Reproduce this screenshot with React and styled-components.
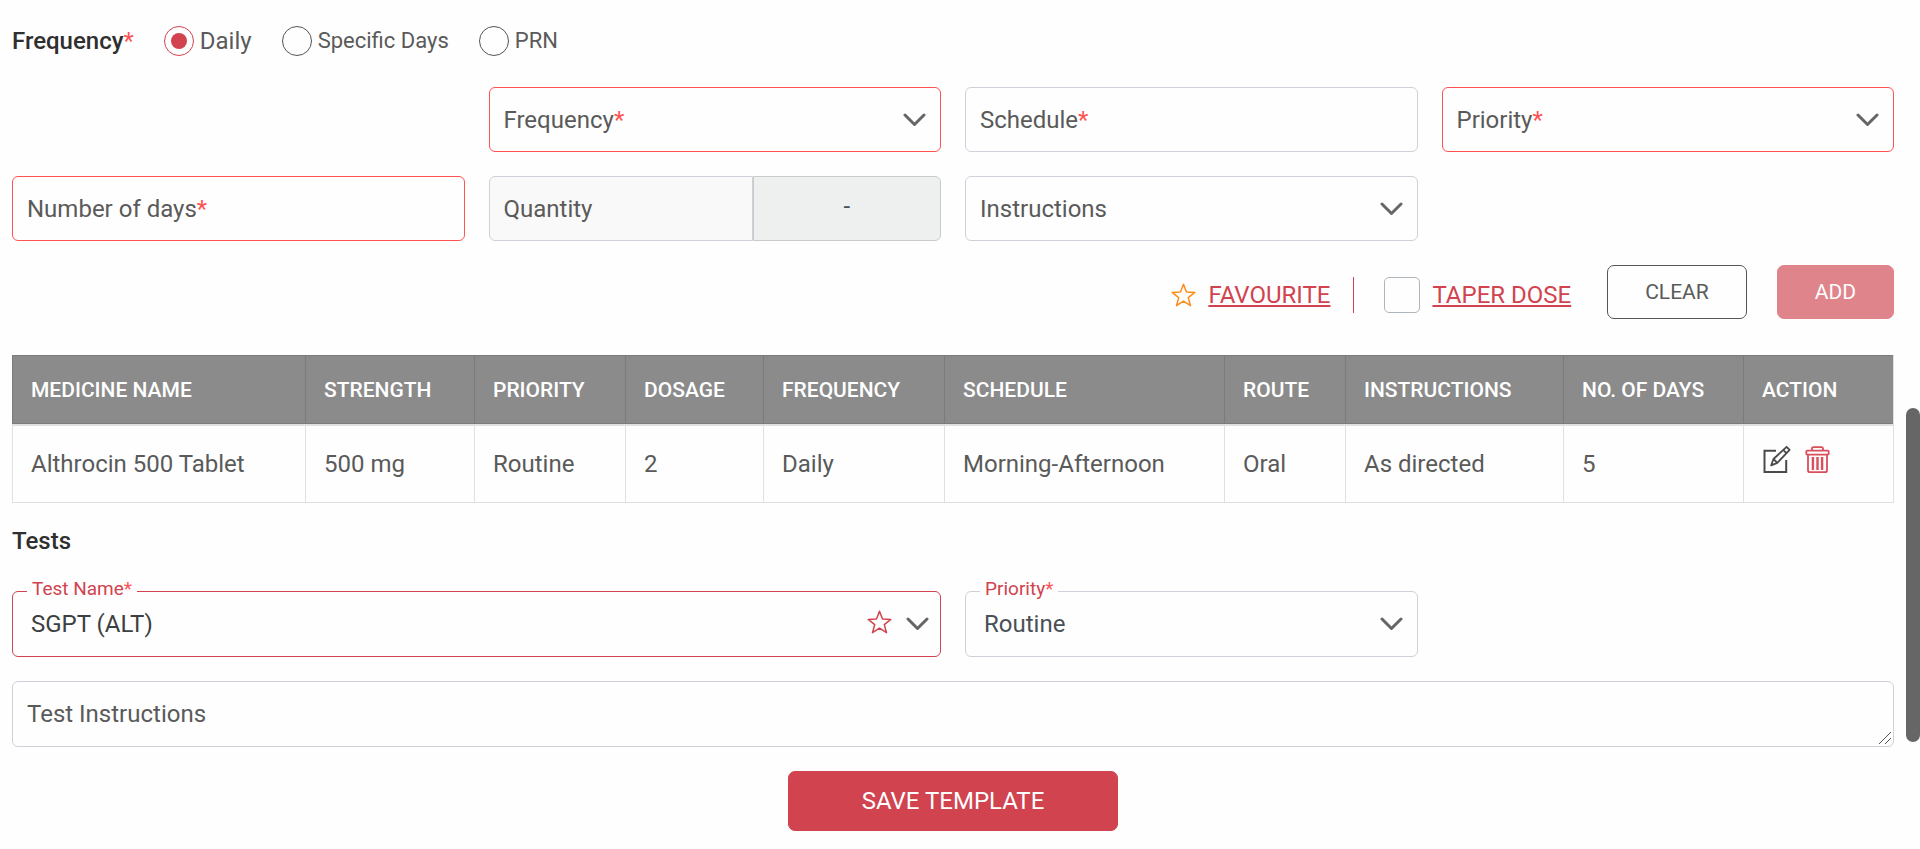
import React from "react";
import styled, { createGlobalStyle, css } from "styled-components";

const color = {
  text: "#5a5a5a",
  dark: "#2f2f2f",
  primary: "#d1434f",
  error: "#ff5252",
  line: "#ced1d9",
  cell: "#e0e0e0",
};

const GlobalStyle = createGlobalStyle`
  *, *::before, *::after { box-sizing: border-box; }
  body {
    margin: 0;
    background: #fefefe;
    color: ${color.text};
    font-family: Roboto, "Liberation Sans", sans-serif;
    font-size: 24px;
    line-height: 28px;
  }
  button, input, select, textarea { font: inherit; color: inherit; margin: 0; }
`;

const Page = styled.div`
  display: flex;
  min-height: 100vh;
`;

const Content = styled.main`
  flex: 1;
  min-width: 0;
  padding: 23px 12px 12px;
`;

const ScrollRail = styled.div`
  position: relative;
  flex: 0 0 14px;
`;

const ScrollThumb = styled.div`
  position: absolute;
  top: 48%;
  left: 0;
  width: 14px;
  height: 334px;
  border-radius: 7px;
  background: #666;
`;

const RadioRow = styled.div`
  display: flex;
  align-items: center;
  gap: 30px;
  height: 36px;
  margin-bottom: 28px;
`;

const Heading = styled.h2`
  margin: 0;
  color: ${color.dark};
  font-size: 24px;
  font-weight: 500;
  line-height: 28px;
`;

const TestsHeading = styled(Heading)`
  margin: 24px 0 36px;
`;

const Required = styled.span`
  color: ${color.error};
  font-weight: 400;
`;

const RadioLabel = styled.label`
  display: flex;
  align-items: center;
  gap: 6px;
  font-size: ${(p) => (p.$small ? 22 : 24)}px;
`;

const Radio = styled.input`
  appearance: none;
  display: grid;
  place-items: center;
  width: 30px;
  height: 30px;
  border: 1px solid #555;
  border-radius: 50%;
  &:checked { border-color: ${color.primary}; }
  &:checked::before {
    content: "";
    width: 16px;
    height: 16px;
    border-radius: 50%;
    background: ${color.primary};
  }
`;

const FieldGrid = styled.div`
  display: grid;
  grid-template-columns: repeat(4, minmax(0, 1fr));
  gap: 24px;
`;

const Field = styled.div`
  position: relative;
  display: grid;
  align-items: center;
  grid-column: ${(p) => p.$column || "auto"};
  & > * { grid-area: 1 / 1; }
`;

const InnerLabel = styled.label`
  justify-self: start;
  z-index: 1;
  padding-left: 15px;
  pointer-events: none;
`;

const FloatingLabel = styled.label`
  position: absolute;
  top: -14px;
  left: 15px;
  padding: 0 5px;
  background: #fefefe;
  color: ${color.primary};
  font-size: 19px;
  line-height: 24px;
`;

const controlStyle = css`
  appearance: none;
  display: block;
  width: 100%;
  min-width: 0;
  height: ${(p) => (p.$tall ? 66 : 65)}px;
  padding: 0 18px;
  border: 1px solid ${(p) => p.$border || color.line};
  border-radius: 6px;
  background: #fefefe;
  outline: none;
`;

const TextInput = styled.input`
  ${controlStyle}
  color: #3d4040;
`;

const Select = styled.select`
  ${controlStyle}
  color: #495057;
`;

const TextArea = styled.textarea`
  ${controlStyle}
  padding-top: 18px;
  resize: none;
`;

const QuantityGroup = styled.div`
  display: flex;
`;

const QuantityField = styled(Field)`
  flex: 265;
  ${TextInput} {
    border-radius: 6px 0 0 6px;
    background: #f9f9f9;
  }
`;

const UnitBox = styled.div`
  flex: 187;
  display: flex;
  align-items: center;
  justify-content: center;
  padding-bottom: 6px;
  border: 1px solid #c8cbcb;
  border-radius: 0 6px 6px 0;
  background: #eef0ef;
  color: #495057;
`;

const FieldIcons = styled.span`
  justify-self: end;
  display: flex;
  align-items: center;
  gap: 14px;
  padding-right: ${(p) => p.$inset || 15}px;
  pointer-events: none;
`;

const StarButton = styled.button`
  display: flex;
  padding: 0;
  border: 0;
  background: none;
  color: ${(p) => p.$color || color.primary};
  pointer-events: auto;
`;

const FieldStarButton = styled(StarButton)`
  padding-bottom: 4px;
`;

const Grip = styled.svg`
  place-self: end;
  margin: 2px;
  pointer-events: none;
`;

const ActionRow = styled.div`
  display: flex;
  align-items: flex-start;
  justify-content: flex-end;
  margin: 24px 0 36px;
`;

const LinkGroup = styled.div`
  display: flex;
  align-items: center;
  gap: 12px;
  height: 36px;
  margin-top: 12px;
`;

const TaperGroup = styled(LinkGroup)`
  margin-left: 23px;
  margin-right: 36px;
  padding-left: 30px;
  border-left: 1px solid ${color.primary};
`;

const ActionLink = styled.a`
  color: ${color.primary};
  text-decoration: underline;
  text-decoration-thickness: 2px;
  text-underline-offset: 2px;
`;

const CheckBox = styled.input`
  appearance: none;
  width: 36px;
  height: 36px;
  border: 1px solid #adb5bd;
  border-radius: 5px;
  background: #fefefe;
`;

const Button = styled.button`
  height: 54px;
  padding: 0 37px;
  border: 1px solid ${(p) => (p.$filled ? color.primary : "#555")};
  border-radius: 7px;
  background: ${(p) => (p.$filled ? color.primary : "#fefefe")};
  color: ${(p) => (p.$filled ? "#fff" : color.text)};
  font-size: 21px;
  &:disabled { opacity: 0.65; }
  & + & { margin-left: 30px; }
`;

const SaveButton = styled(Button)`
  display: block;
  width: 330px;
  height: 60px;
  margin: 24px auto 0;
  font-size: 24px;
`;

const Table = styled.table`
  width: 100%;
  table-layout: fixed;
  border-collapse: separate;
  border-spacing: 0;
  border-right: 1px solid ${color.cell};
`;

const HeadCell = styled.th`
  width: ${(p) => p.$width}px;
  height: 69px;
  padding: 0 0 0 18px;
  border: solid #7b7b7b;
  border-width: 1px 0 1px 1px;
  background: #8b8b8b;
  color: #fff;
  font-size: 21px;
  font-weight: 500;
  text-align: left;
  white-space: nowrap;
`;

const Cell = styled.td`
  height: 79px;
  padding: 0 0 0 18px;
  border: solid ${color.cell};
  border-width: 2px 0 1px 1px;
  white-space: nowrap;
`;

const RowActions = styled.div`
  display: flex;
  gap: 14px;
  padding-bottom: 10px;
`;

const IconButton = styled.button`
  display: flex;
  padding: 0;
  border: 0;
  background: none;
  color: ${(p) => p.$color};
`;

const TestFields = styled.div`
  display: grid;
  gap: 24px;
`;

const Chevron = () => (
  <svg width="23" height="14" viewBox="0 0 23 14" fill="none" stroke="#666" strokeWidth="3" strokeLinecap="round" strokeLinejoin="round" aria-hidden="true">
    <path d="M2 2l9.5 9.5L21 2" />
  </svg>
);

const Star = () => (
  <svg width="25" height="24" viewBox="0 0 25 24" fill="none" stroke="currentColor" strokeWidth="1.5" strokeLinejoin="round" aria-hidden="true">
    <path d="M12.5 1.2l3 7.8 8.3.4-6.5 5.2 2.2 8.1-7-4.6-7 4.6 2.2-8.1L1.2 9.4 9.5 9z" />
  </svg>
);

const EditIcon = () => (
  <svg width="29" height="29" viewBox="0 0 29 29" fill="none" stroke="currentColor" strokeWidth="2" aria-hidden="true">
    <path d="M14 5.7H2.5v21.4h21.7V15" />
    <path d="M24.6 1.8l3 3L15.3 17.9 9.2 20.3l2.3-6.3zM21.4 5.1l3 3.1M11.5 14l3.8 3.9" strokeWidth="1.8" strokeLinejoin="round" />
  </svg>
);

const TrashIcon = () => (
  <svg width="25" height="29" viewBox="0 0 25 29" fill="none" stroke="currentColor" strokeWidth="1.8" strokeLinejoin="round" aria-hidden="true">
    <path d="M7 5.5V3.6q0-1.5 1.5-1.5h8q1.5 0 1.5 1.5v1.9" />
    <rect x="1.3" y="5.6" width="22.4" height="4" rx="1" />
    <path d="M3 9.6v15.6q0 2 2 2h15q2 0 2-2V9.6" />
    <path d="M7.9 12v13M12.5 12v13M17.1 12v13" strokeWidth="2.4" />
  </svg>
);

const RequiredMark = () => <Required>*</Required>;

const columns = [
  ["MEDICINE NAME", 293, "Althrocin 500 Tablet"],
  ["STRENGTH", 169, "500 mg"],
  ["PRIORITY", 151, "Routine"],
  ["DOSAGE", 138, "2"],
  ["FREQUENCY", 181, "Daily"],
  ["SCHEDULE", 280, "Morning-Afternoon"],
  ["ROUTE", 121, "Oral"],
  ["INSTRUCTIONS", 218, "As directed"],
  ["NO. OF DAYS", 180, "5"],
];

function SelectField({ id, label, required, border, column }) {
  return (
    <Field $column={column}>
      <InnerLabel htmlFor={id}>
        {label}
        {required && <RequiredMark />}
      </InnerLabel>
      <Select id={id} $border={border} defaultValue="">
        <option value="" />
      </Select>
      <FieldIcons>
        <Chevron />
      </FieldIcons>
    </Field>
  );
}

export default function App() {
  return (
    <>
      <GlobalStyle />
      <Page>
        <Content>
          <RadioRow role="radiogroup" aria-labelledby="frequency-heading">
            <Heading id="frequency-heading">
              Frequency<RequiredMark />
            </Heading>
            {["Daily", "Specific Days", "PRN"].map((name, i) => (
              <RadioLabel key={name} $small={i > 0}>
                <Radio type="radio" name="frequency-type" defaultChecked={i === 0} />
                {name}
              </RadioLabel>
            ))}
          </RadioRow>

          <FieldGrid>
            <SelectField id="frequency" label="Frequency" required border={color.error} column="2" />
            <Field>
              <InnerLabel htmlFor="schedule">
                Schedule<RequiredMark />
              </InnerLabel>
              <TextInput id="schedule" type="text" />
            </Field>
            <SelectField id="priority" label="Priority" required border={color.error} />
            <Field>
              <InnerLabel htmlFor="days">
                Number of days<RequiredMark />
              </InnerLabel>
              <TextInput id="days" type="text" $border={color.error} />
            </Field>
            <QuantityGroup>
              <QuantityField>
                <InnerLabel htmlFor="quantity">Quantity</InnerLabel>
                <TextInput id="quantity" type="text" disabled />
              </QuantityField>
              <UnitBox>-</UnitBox>
            </QuantityGroup>
            <SelectField id="instructions" label="Instructions" />
          </FieldGrid>

          <ActionRow>
            <LinkGroup>
              <StarButton type="button" aria-label="Mark as favourite" $color="#ff8c1a">
                <Star />
              </StarButton>
              <ActionLink href="#favourite">FAVOURITE</ActionLink>
            </LinkGroup>
            <TaperGroup>
              <CheckBox type="checkbox" aria-labelledby="taper-link" />
              <ActionLink id="taper-link" href="#taper">TAPER DOSE</ActionLink>
            </TaperGroup>
            <Button type="button">CLEAR</Button>
            <Button type="button" $filled disabled>ADD</Button>
          </ActionRow>

          <Table>
            <thead>
              <tr>
                {columns.map(([name, width]) => (
                  <HeadCell key={name} $width={width}>{name}</HeadCell>
                ))}
                <HeadCell $width={150}>ACTION</HeadCell>
              </tr>
            </thead>
            <tbody>
              <tr>
                {columns.map(([name, , value]) => (
                  <Cell key={name}>{value}</Cell>
                ))}
                <Cell>
                  <RowActions>
                    <IconButton type="button" aria-label="Edit" $color="#4a4a4a"><EditIcon /></IconButton>
                    <IconButton type="button" aria-label="Delete" $color="#d94f5b"><TrashIcon /></IconButton>
                  </RowActions>
                </Cell>
              </tr>
            </tbody>
          </Table>

          <TestsHeading>Tests</TestsHeading>
          <TestFields>
            <FieldGrid>
              <Field $column="span 2">
                <TextInput id="test-name" type="text" defaultValue="SGPT (ALT)" $border={color.primary} $tall />
                <FloatingLabel htmlFor="test-name">
                  Test Name<RequiredMark />
                </FloatingLabel>
                <FieldIcons $inset={12}>
                  <FieldStarButton type="button" aria-label="Favourite test"><Star /></FieldStarButton>
                  <Chevron />
                </FieldIcons>
              </Field>
              <Field>
                <Select id="test-priority" defaultValue="Routine" $tall>
                  <option>Routine</option>
                </Select>
                <FloatingLabel htmlFor="test-priority">
                  Priority<RequiredMark />
                </FloatingLabel>
                <FieldIcons>
                  <Chevron />
                </FieldIcons>
              </Field>
            </FieldGrid>
            <Field>
              <InnerLabel htmlFor="test-instructions">Test Instructions</InnerLabel>
              <TextArea id="test-instructions" $tall />
              <Grip width="13" height="13" viewBox="0 0 13 13" stroke="#555" aria-hidden="true">
                <path d="M0 12L12 0M6 12l6-6" />
              </Grip>
            </Field>
          </TestFields>
          <SaveButton type="button" $filled>SAVE TEMPLATE</SaveButton>
        </Content>
        <ScrollRail>
          <ScrollThumb />
        </ScrollRail>
      </Page>
    </>
  );
}
